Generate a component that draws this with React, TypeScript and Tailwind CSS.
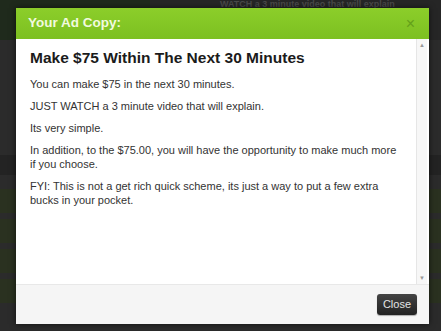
import React from "react";

export default function App() {
  return (
    <div className="relative w-[441px] h-[331px] overflow-hidden bg-[#2b2b2b] font-['Liberation_Sans',Arial,sans-serif]">
      {/* faint page behind the overlay */}
      <div className="absolute inset-0 flex flex-col">
        <div className="h-[40px] bg-[#262626] flex">
          <div className="w-[150px] bg-[#1f2a1c]" />
          <div className="flex-1 pl-[70px] pt-[1px] text-[9px] leading-[7px] font-bold text-[#4a4a4a] whitespace-nowrap">
            WATCH a 3 minute video that will explain
          </div>
        </div>
        <div className="flex-1 flex flex-col">
          <div className="h-[115px]" />
          <div className="h-[20px] bg-[#232323]" />
          <div className="h-[14px]" />
          <div className="flex flex-col gap-[6px]">
            <div className="h-[24px] bg-[#2a3120]" />
            <div className="h-[24px] bg-[#2a3120]" />
            <div className="h-[24px] bg-[#2a3120]" />
            <div className="h-[24px] bg-[#2a3120]" />
          </div>
        </div>
      </div>

      <div className="relative ml-[16px] mt-[8px] w-[413px] flex flex-col bg-white shadow-[0_0_6px_rgba(0,0,0,0.6)]">
        <div className="h-[31px] flex items-center justify-between px-[12px] bg-gradient-to-b from-[#8cce2a] to-[#7cc021]">
          <span className="text-[13.5px] font-bold text-[#f1fadf]">Your Ad Copy:</span>
          <span className="text-[16px] text-[#64a01a] leading-none mr-[2px]">×</span>
        </div>
        <div className="h-[245px] flex">
          <div className="flex-1 pl-[14px] pr-[18px] pt-[10px] text-[#333] text-[11px] leading-[14px]">
            <h1 className="text-[15.5px] font-bold text-[#1b1b1b] leading-[18px] mb-[10px]">
              Make $75 Within The Next 30 Minutes
            </h1>
            <p className="mb-[8px]">You can make $75 in the next 30 minutes.</p>
            <p className="mb-[8px]">JUST WATCH a 3 minute video that will explain.</p>
            <p className="mb-[8px]">Its very simple.</p>
            <p className="mb-[8px]">
              In addition, to the $75.00, you will have the opportunity to make much more if you choose.
            </p>
            <p>FYI: This is not a get rich quick scheme, its just a way to put a few extra bucks in your pocket.</p>
          </div>
          <div className="w-[11px] mr-[2px] bg-[#f7f7f7] border-l border-[#e6e6e6] flex flex-col items-center justify-between py-[3px]">
            <span className="text-[6px] text-[#999] leading-none">▲</span>
            <span className="text-[6px] text-[#999] leading-none">▼</span>
          </div>
        </div>
        <div className="h-[40px] bg-[#f5f5f5] border-t border-[#e8e8e8] flex items-center justify-end pr-[12px]">
          <button className="h-[21px] px-[6px] rounded-[3px] bg-gradient-to-b from-[#444] to-[#222] text-[11px] text-[#e4e4e4] shadow-[0_1px_1px_rgba(0,0,0,0.3)]">
            Close
          </button>
        </div>
      </div>
    </div>
  );
}
